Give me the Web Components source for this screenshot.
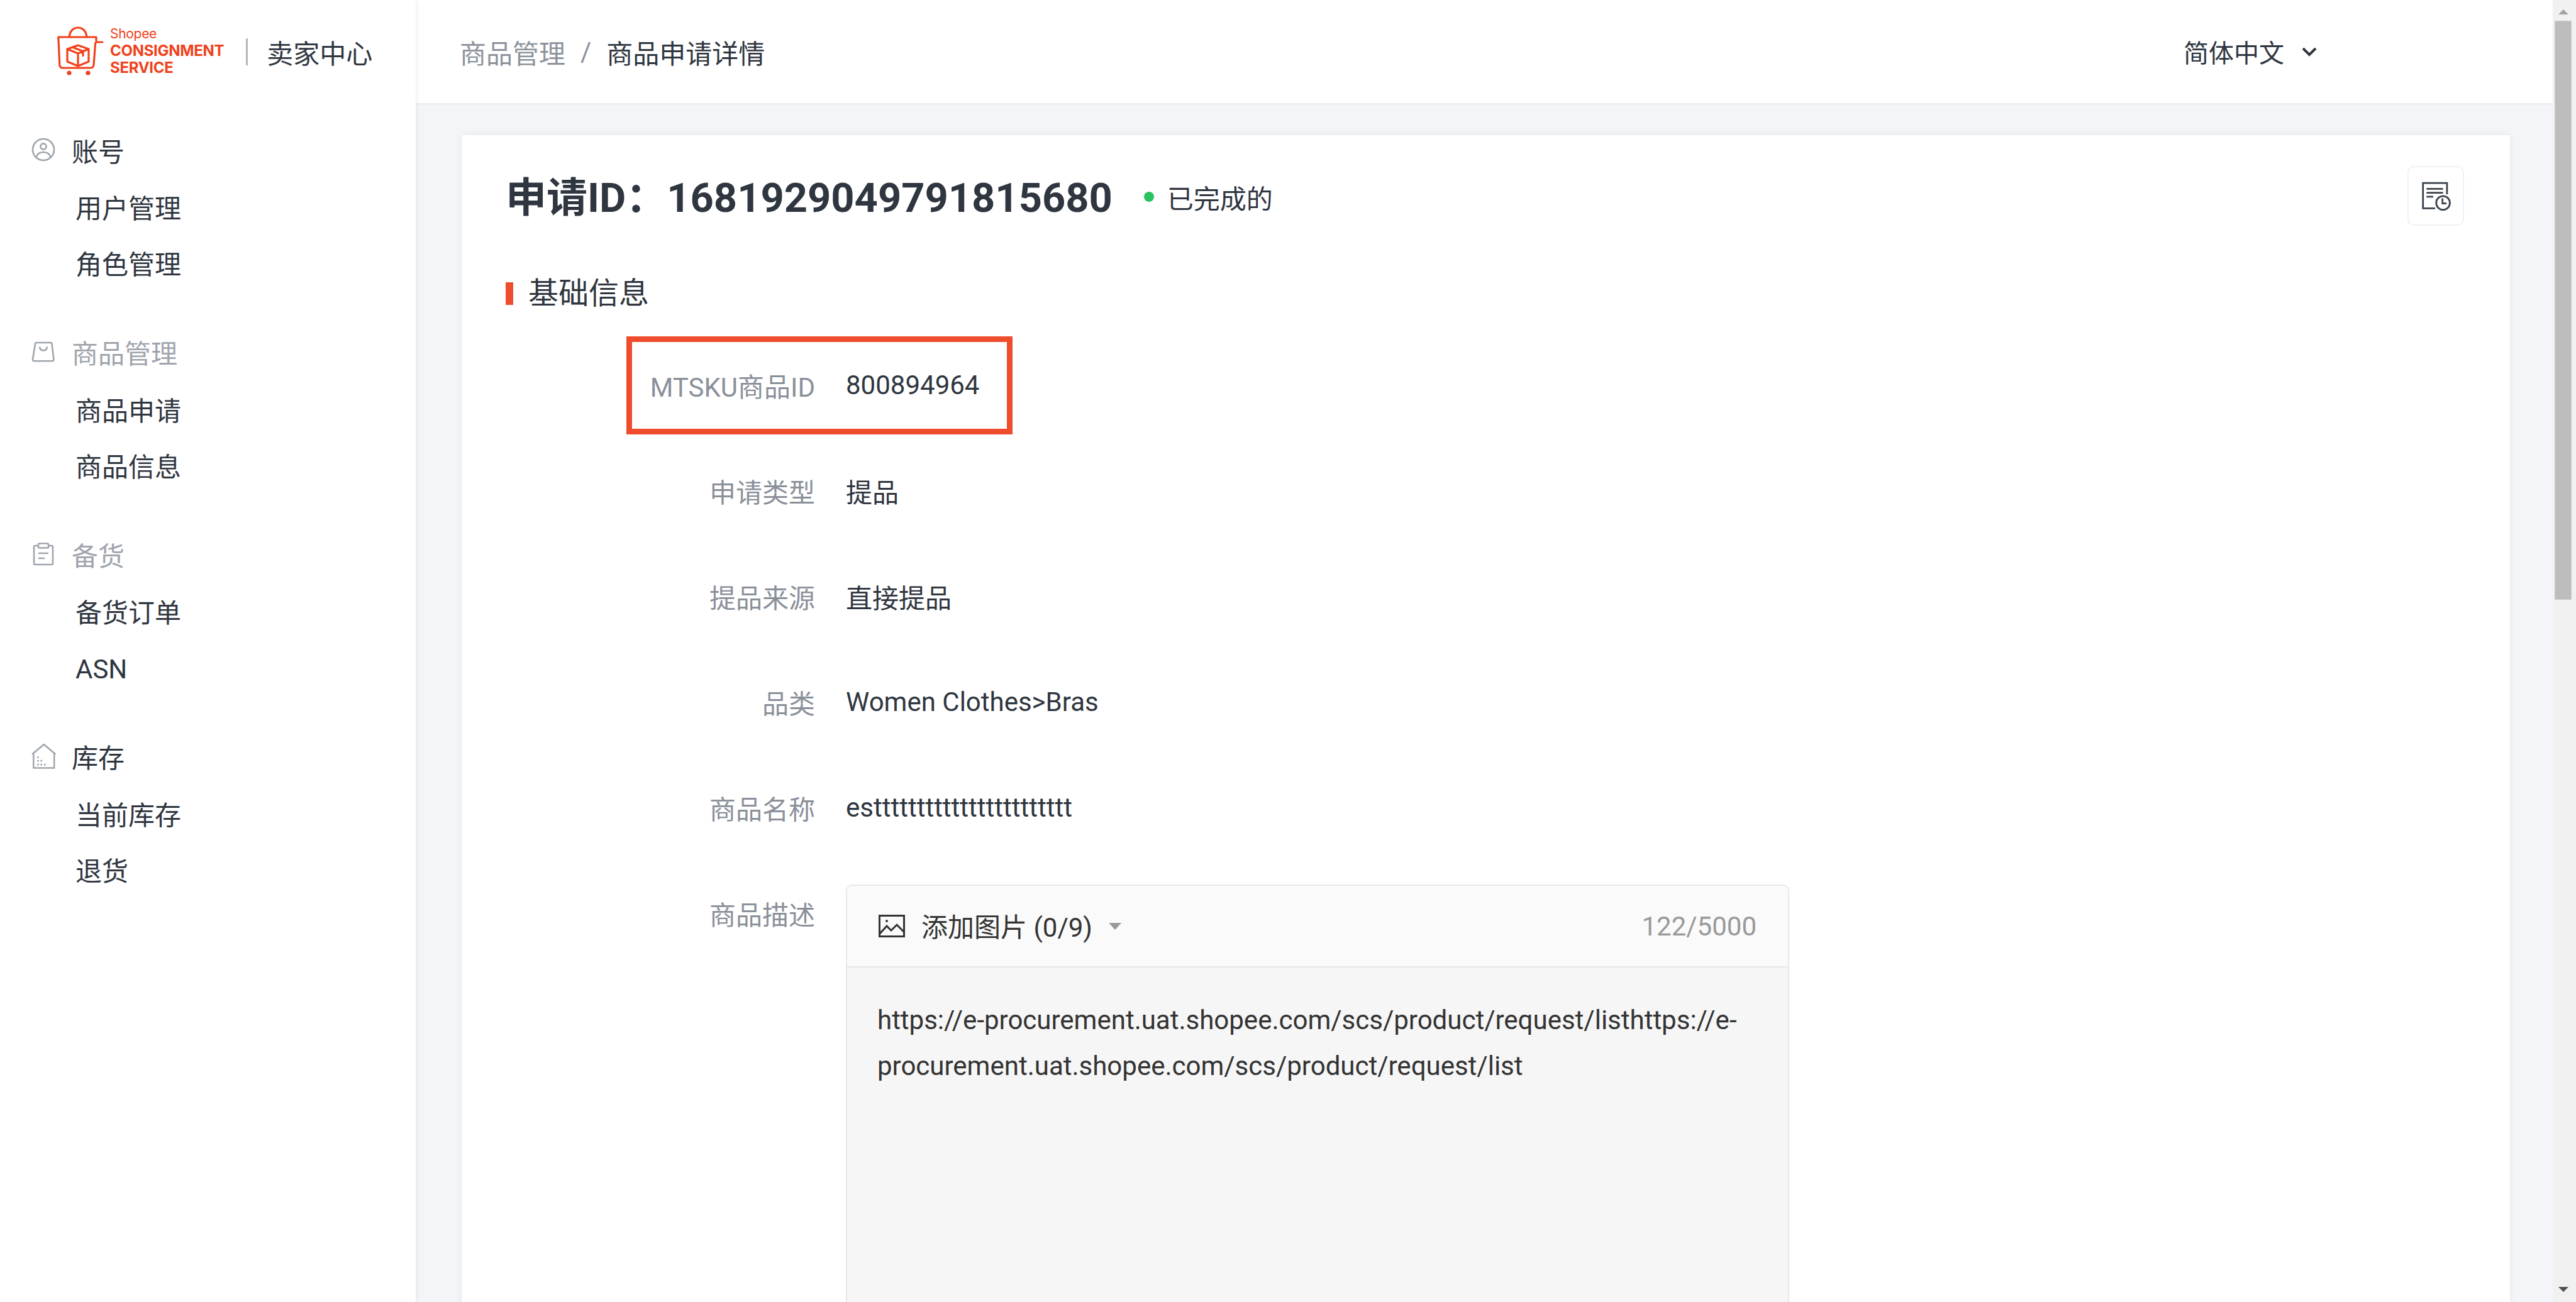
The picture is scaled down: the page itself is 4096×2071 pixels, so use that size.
<!doctype html>
<html lang="zh">
<head>
<meta charset="utf-8">
<title>商品申请详情</title>
<style>
    html, body { margin: 0; height: 100%; overflow: hidden; }
    body {
        font-family: Roboto, "Noto Sans CJK SC", sans-serif;
        font-size: 42px;
        color: #2f3640;
        background: #f4f5f8;
    }
</style>
</head>
<body>
<app-shell>
    <side-nav slot="nav">
        <brand-logo></brand-logo>
        <nav-group label="账号" icon="user" active>
            <nav-item>用户管理</nav-item>
            <nav-item>角色管理</nav-item>
        </nav-group>
        <nav-group label="商品管理" icon="bag">
            <nav-item>商品申请</nav-item>
            <nav-item>商品信息</nav-item>
        </nav-group>
        <nav-group label="备货" icon="clip">
            <nav-item>备货订单</nav-item>
            <nav-item>ASN</nav-item>
        </nav-group>
        <nav-group label="库存" icon="house" active>
            <nav-item>当前库存</nav-item>
            <nav-item>退货</nav-item>
        </nav-group>
    </side-nav>
    <top-bar slot="top"></top-bar>
    <detail-card>
        <info-row label="MTSKU商品ID" marked>800894964</info-row>
        <info-row label="申请类型">提品</info-row>
        <info-row label="提品来源">直接提品</info-row>
        <info-row label="品类">Women Clothes&gt;Bras</info-row>
        <info-row label="商品名称">esttttttttttttttttttttttt</info-row>
        <info-row label="商品描述" top>
            <desc-editor>https://e-procurement.uat.shopee.com/scs/product/request/listhttps://e-procurement.uat.shopee.com/scs/product/request/list</desc-editor>
        </info-row>
    </detail-card>
    <fake-scrollbar slot="scroll"></fake-scrollbar>
</app-shell>

<script>
const ICONS = {
    user: `<svg width="38" height="38" viewBox="0 0 38 38" fill="none" stroke="#a0a6ae" stroke-width="2.6"><circle cx="19" cy="19" r="17"/><circle cx="19" cy="14" r="4.6"/><path d="M7.500 32c1-6 5.500-9 11.500-9s10.500 3 11.500 9"/></svg>`,
    bag: `<svg width="38" height="38" viewBox="0 0 38 38" fill="none" stroke="#a0a6ae" stroke-width="2.6" stroke-linejoin="round"><path d="M8 4h22.500a2 2 0 0 1 2 1.800L35.500 31a2 2 0 0 1-2 2.300H4a2 2 0 0 1-2-2.300L6 5.800A2 2 0 0 1 8 4z"/><path d="M13 10.500c.5 4 3 6 6 6s5.500-2 6-6"/></svg>`,
    clip: `<svg width="38" height="38" viewBox="0 0 38 38" fill="none" stroke="#a0a6ae" stroke-width="2.6" stroke-linejoin="round"><path d="M11 6H6a2 2 0 0 0-2 2v26a2 2 0 0 0 2 2h26a2 2 0 0 0 2-2V8a2 2 0 0 0-2-2h-5"/><rect x="11" y="2.500" width="16" height="7" rx="1.500"/><path d="M11 18h16M11 26h10"/></svg>`,
    house: `<svg width="40" height="40" viewBox="0 0 40 40" fill="none" stroke="#a0a6ae" stroke-width="2.500" stroke-linejoin="round"><path d="M1.200 16.700 19.800 1l18.500 15.700"/><path d="M3.300 14.500v23.900h32.900V14.500"/><path stroke="none" fill="#a0a6ae" d="M9.200 20.200h2.600v2.600H9.200zM9.200 25.800h2.600v2.600H9.200zM14.400 25.800H17v2.600h-2.600zM9.200 31.800h2.600v2.600H9.200zM14.400 31.800H17v2.600h-2.600zM20 31.800h2.600v2.600H20z"/></svg>`
}

const template = html => {
    const t = document.createElement('template')
    t.innerHTML = html
    return t
}

const define = (name, tpl, extra) => {
    customElements.define(name, class extends HTMLElement {
        constructor() {
            super()
            this.attachShadow({ mode: 'open' })
            this.shadowRoot.appendChild(tpl.content.cloneNode(true))
        }
        connectedCallback() {
            if (extra)
                extra(this, this.shadowRoot)
        }
    })
}

define('app-shell', template(`
    <style>
        :host { display: flex; height: 2071px; width: 4096px; overflow: hidden; }
        #main { flex: 1; min-width: 0; display: flex; flex-direction: column; overflow: hidden; }
        #body { flex: 1; min-height: 0; overflow: hidden; padding: 48px 68px 0 73px; }
    </style>
    <slot name="nav"></slot>
    <div id="main">
        <slot name="top"></slot>
        <div id="body"><slot></slot></div>
    </div>
    <slot name="scroll"></slot>
`))

define('side-nav', template(`
    <style>
        :host {
            display: block; flex: 0 0 661px; height: 100%; box-sizing: border-box;
            background: #fff; box-shadow: 0 0 8px rgba(40, 50, 70, .12); position: relative; z-index: 2;
        }
    </style>
    <slot></slot>
`))

define('brand-logo', template(`
    <style>
        :host { display: flex; align-items: center; height: 165px; padding-left: 91px; color: #f0421c; }
        svg { flex: none; display: block; margin-top: -4px; }
        #words { margin-left: 10px; font-family: Inter, sans-serif; display: flex; flex-direction: column; margin-top: -3px; }
        #shopee { font-size: 21px; line-height: 26px; letter-spacing: -.3px; }
        .big { font-size: 24px; font-weight: 700; line-height: 27px; letter-spacing: -.3px; }
        #rule { width: 3px; height: 43px; background: #b4b9c1; margin-left: 35px; }
        #center { margin-left: 30px; font: 42px Roboto, "Noto Sans CJK SC", sans-serif; color: #2f3640; }
    </style>
    <svg width="74" height="78" viewBox="0 0 74 78" fill="none" stroke="#f0421c" stroke-width="3.200" stroke-linejoin="round" stroke-linecap="round">
        <path d="M19 17C20 7 26 2 33 2s13 5 14 15"/>
        <path d="M1.800 17H62v6"/>
        <path d="M1.800 17l2 44c0 3 2 5 5 5h44c3 0 5-2 5.200-5L60.500 28c0-2 1-3 3-3H72"/>
        <path d="M33 30l17 6v20l-17 7-17-7V36zM16 36l17 7 17-7M33 43v20M24 33l17 6.500v7"/>
        <circle cx="19" cy="74" r="2" fill="#f0421c"/><circle cx="49" cy="74" r="2" fill="#f0421c"/>
    </svg>
    <div id="words">
        <span id="shopee">Shopee</span>
        <span class="big">CONSIGNMENT</span>
        <span class="big">SERVICE</span>
    </div>
    <div id="rule"></div>
    <div id="center">卖家中心</div>
`))

define('nav-group', template(`
    <style>
        :host { display: block; padding-top: 27px; padding-bottom: 20.500px; }
        :host(:not([active])) #label { color: #a0a5ad; }
        #head { display: flex; align-items: center; height: 92px; margin-bottom: 4px; padding-left: 50px; }
        #icon { flex: 0 0 64px; display: flex; align-items: center; height: 38px; }
        svg { display: block; }
        #label { color: #2f3640; }
    </style>
    <div id="head"><span id="icon"></span><span id="label"></span></div>
    <slot></slot>
`), (el, root) => {
    root.getElementById('label').textContent = el.getAttribute('label')
    root.getElementById('icon').innerHTML = ICONS[el.getAttribute('icon')]
})

define('nav-item', template(`
    <style>
        :host { display: block; height: 89px; line-height: 89px; padding-left: 120px; color: #2f3640; }
    </style>
    <slot></slot>
`))

define('top-bar', template(`
    <style>
        :host {
            display: flex; align-items: center; flex: 0 0 167px; box-sizing: border-box; height: 167px;
            background: #fff; border-bottom: 3px solid #eeeff2; padding-left: 70px;
        }
        #crumb { color: #8d939c; }
        #sep { color: #8d939c; margin: 0 24px 0 24px; }
        #lang { margin-left: auto; margin-right: 375px; display: flex; align-items: center; gap: 28px; font-size: 40px; }
        svg { display: block; }
    </style>
    <span id="crumb">商品管理</span><span id="sep">/</span><span>商品申请详情</span>
    <div id="lang">简体中文
        <svg width="24" height="15" viewBox="0 0 24 15" fill="none" stroke="#2f3640" stroke-width="4"><path d="M2 2l10 10L22 2"/></svg>
    </div>
`))

define('detail-card', template(`
    <style>
        :host {
            display: block; background: #fff; height: 3000px; box-sizing: border-box; padding: 48px 73px 0 70px;
            box-shadow: 0 0 10px rgba(40, 50, 70, .08);
        }
        #title { display: flex; align-items: center; height: 96px; position: relative; }
        h1 { margin: 0; padding-top: 8px; font-size: 65px; font-weight: 700; line-height: 96px; color: #2f3640; white-space: nowrap; }
        #status { display: flex; align-items: center; margin-left: 50px; padding-top: 4px; }
        #dot { width: 16px; height: 16px; border-radius: 50%; background: #2bc261; margin-right: 21px; }
        #log {
            margin-left: auto; width: 90px; height: 95px; box-sizing: border-box; border: 2px solid #eff1f5; border-radius: 10px;
            display: flex; align-items: center; justify-content: center;
        }
        h2 {
            margin: 73px 0 0; font-size: 48px; font-weight: 400; line-height: 70px; display: flex; align-items: center;
            color: #2f3640;
        }
        h2::before { content: ""; width: 12px; height: 36px; background: #ee4d2d; margin-right: 24px; }
        #rows { padding-top: 26px; }
    </style>
    <div id="title">
        <h1>申请ID：1681929049791815680</h1>
        <div id="status"><span id="dot"></span>已完成的</div>
        <div id="log">
            <svg width="50" height="50" viewBox="-1 -2 50 50" fill="none" stroke="#3a424d" stroke-width="2.800">
                <path d="M41.900 21V3.100H3.700v40.300H23"/>
                <path d="M9.300 12.400h26.300M9.300 18.600h26.300M9.300 24.800H20"/>
                <circle cx="35.600" cy="34.700" r="10.900" fill="#fff"/>
                <path d="M34.700 27.500v8.100h6.500"/>
            </svg>
        </div>
    </div>
    <h2>基础信息</h2>
    <div id="rows"><slot></slot></div>
`))

define('info-row', template(`
    <style>
        :host { display: flex; align-items: center; min-height: 168px; position: relative; }
        :host([top]) { align-items: flex-start; padding-top: 39px; }
        #label { flex: 0 0 492px; text-align: right; color: #8a909a; margin-right: 49px; white-space: nowrap; }
        :host([top]) #label { padding-top: 18px; line-height: 64px; }
        #value { white-space: nowrap; color: #2f3640; }
        :host([marked]) #mark {
            display: block; position: absolute; left: 192px; top: 7px; width: 614px; height: 156px; box-sizing: border-box;
            border: 9.500px solid #ee4c2c;
        }
        #mark { display: none; }
    </style>
    <span id="label"></span><div id="value"><slot></slot></div><span id="mark"></span>
`), (el, root) => {
    root.getElementById('label').textContent = el.getAttribute('label')
})

define('desc-editor', template(`
    <style>
        :host {
            display: block; width: 1500px; box-sizing: border-box; border: 2px solid #e8e8e8; border-radius: 10px;
            background: #f6f6f6; white-space: normal; height: 1000px; overflow: hidden;
        }
        #bar {
            display: flex; align-items: center; height: 130px; box-sizing: border-box; padding: 0 50px;
            background: #fafafa; border-bottom: 2px solid #e8e8e8; color: #333;
        }
        svg { display: block; }
        #add { margin-left: 26px; margin-bottom: 3px; }
        #caret { width: 0; height: 0; border: 10px solid transparent; border-top: 11px solid #999; border-bottom: 0; margin-left: 26px; }
        #count { margin-left: auto; color: #999; }
        #text { padding: 47px 48px; line-height: 73px; color: #333; word-break: normal; }
    </style>
    <div id="bar">
        <svg width="42" height="36" viewBox="0 0 42 36" fill="none" stroke="#333" stroke-width="3">
            <rect x="1.500" y="1.500" width="39" height="33"/>
            <path d="M2 30l11-12 7 7 9-9 11 11"/>
            <circle cx="13" cy="10" r="2" fill="#333" stroke="none"/>
        </svg>
        <span id="add">添加图片 (0/9)</span><span id="caret"></span>
        <span id="count">122/5000</span>
    </div>
    <div id="text"><slot></slot></div>
`))

define('fake-scrollbar', template(`
    <style>
        :host { display: flex; flex-direction: column; flex: 0 0 37px; height: 100%; background: #f1f1f1; box-sizing: border-box; padding-left: 3px; }
        #up { width: 0; height: 0; margin: 15px 0 0 6px; border: 8px solid transparent; border-bottom: 8px solid #a3a3a3; border-top: 0; }
        #thumb { width: 27px; height: 921px; box-sizing: border-box; margin-top: 10px; background: #bdbdbd; border: 1px solid #cbcbcb; }
        #down { width: 0; height: 0; margin: auto 0 16px 6px; border: 8px solid transparent; border-top: 8px solid #505050; border-bottom: 0; }
    </style>
    <div id="up"></div>
    <div id="thumb"></div>
    <div id="down"></div>
`))
</script>
</body>
</html>
